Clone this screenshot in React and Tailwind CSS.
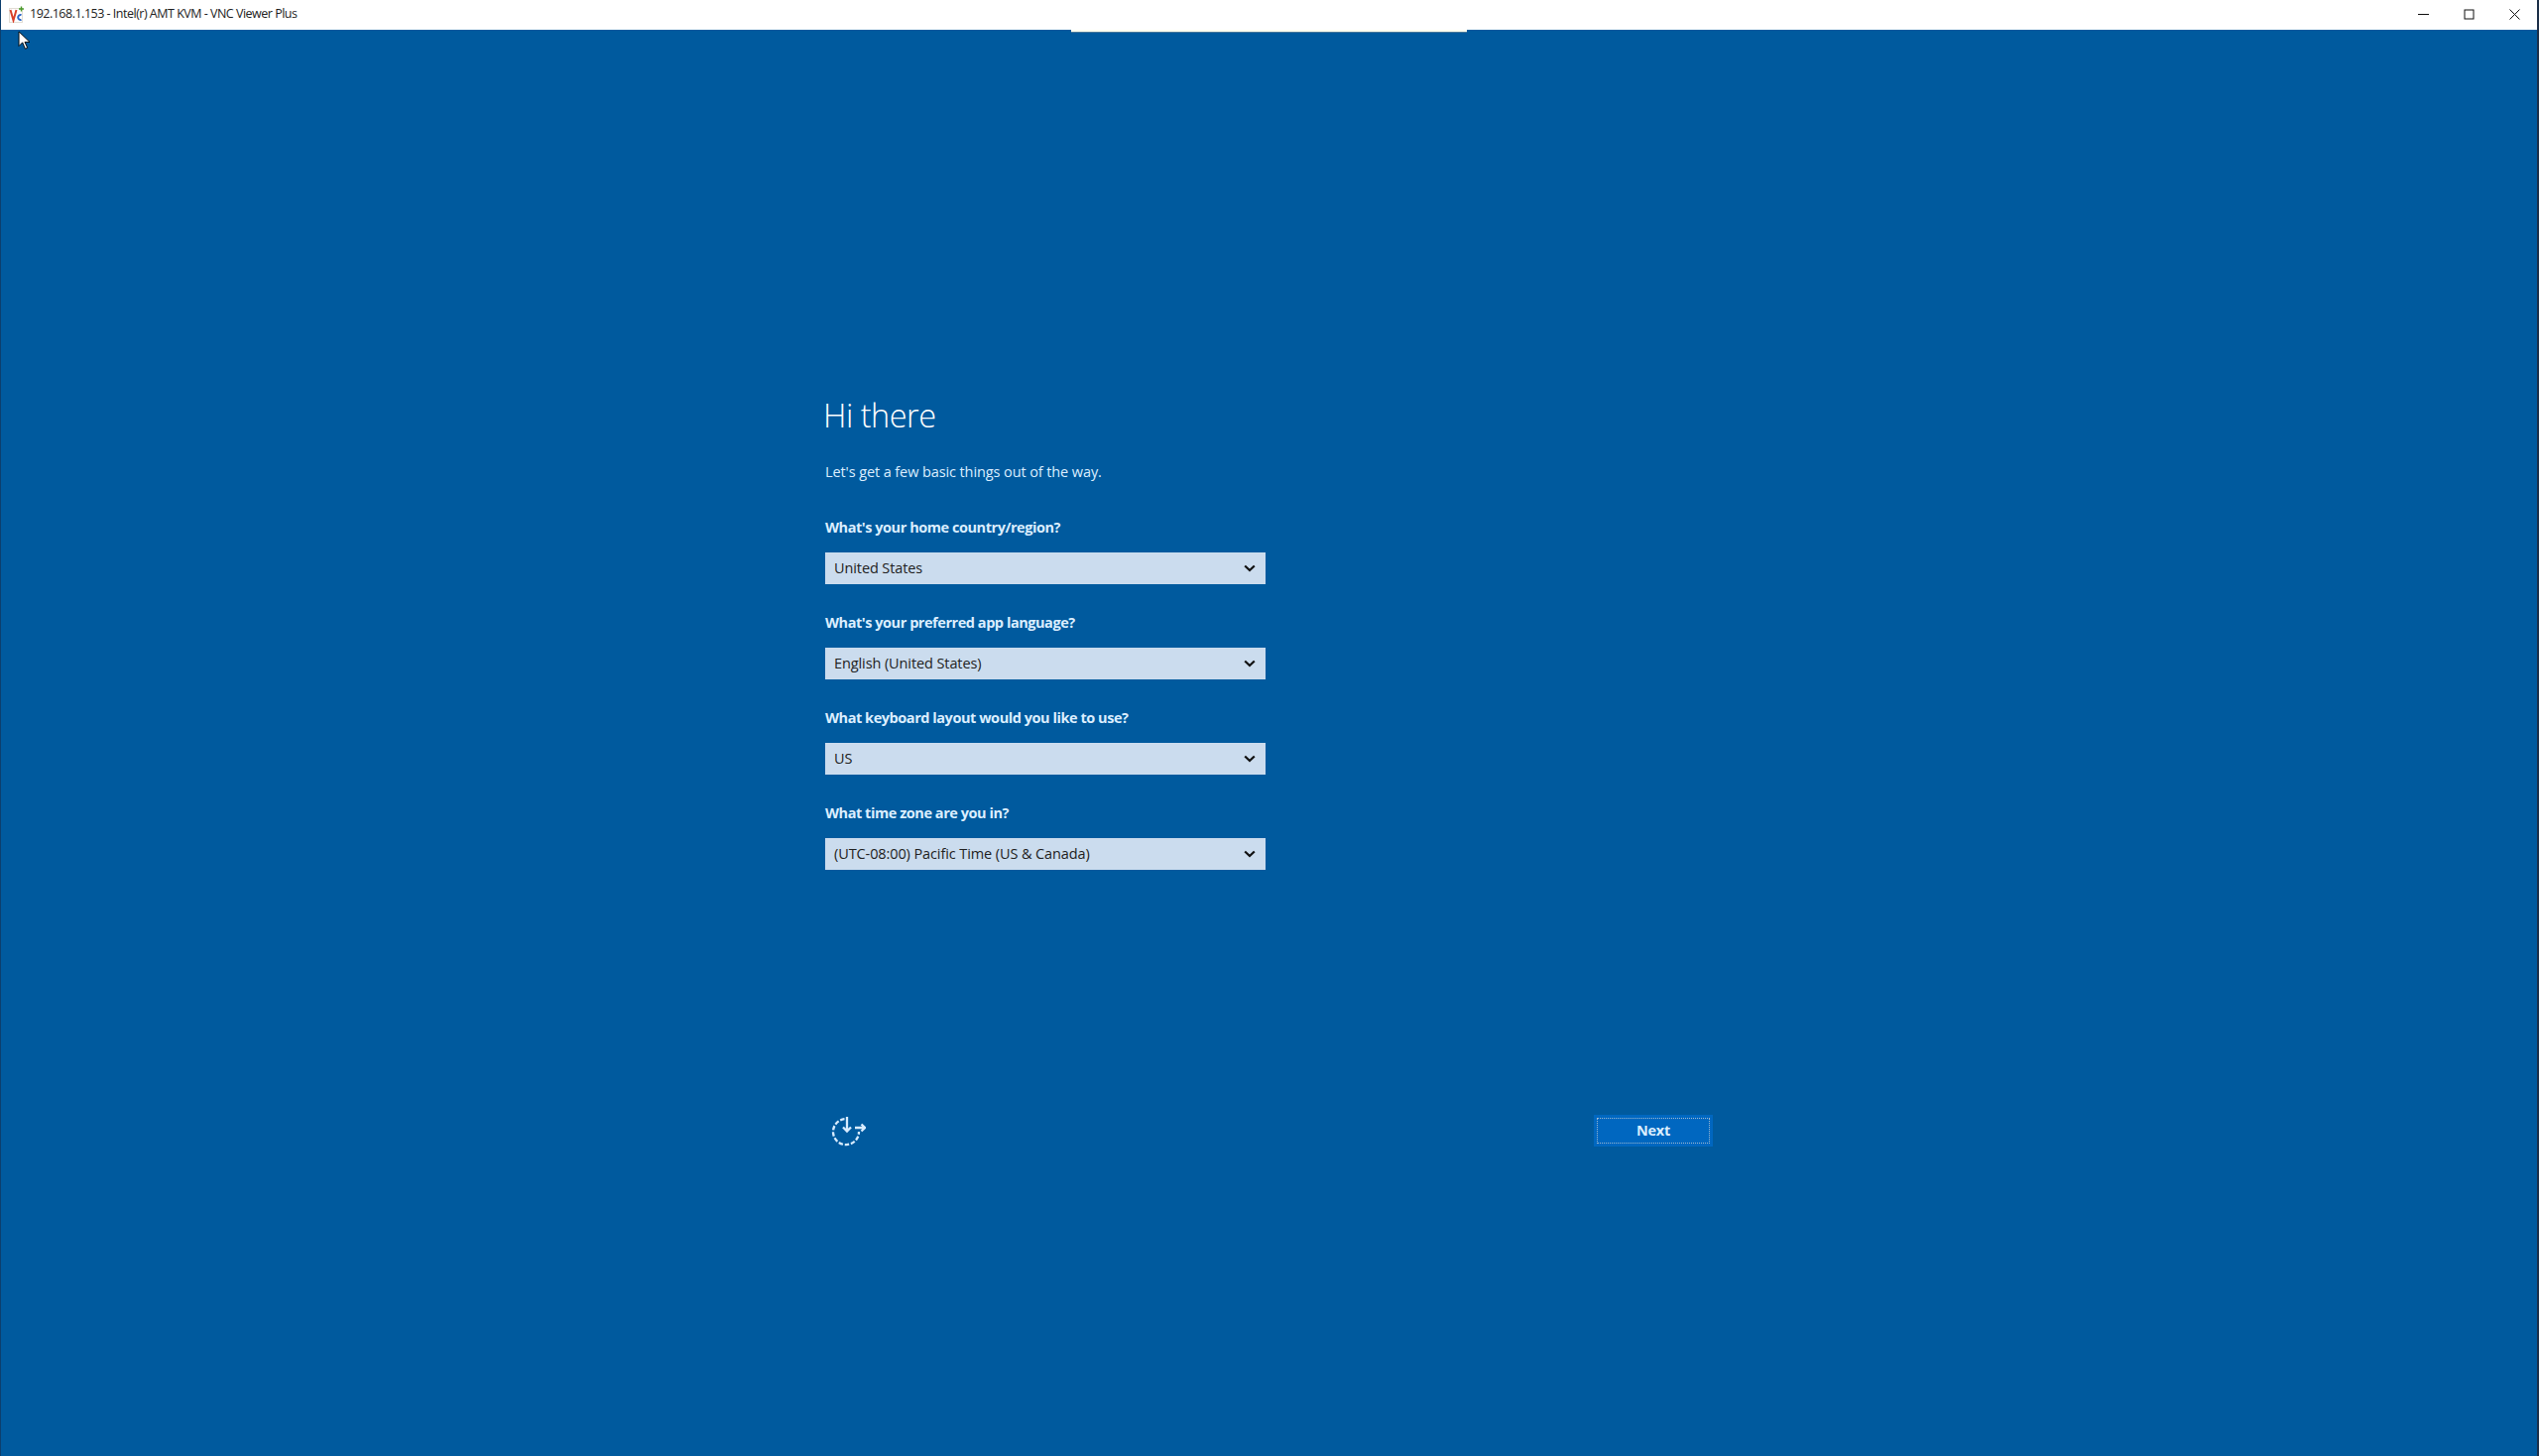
const sans = "font-['Open_Sans','Noto_Sans',sans-serif]";

function Chevron() {
  return (
    <svg width="12" height="8" viewBox="0 0 12 8" fill="none" className="shrink-0">
      <path d="M1.2 1.5 L6 6 L10.8 1.5" stroke="#111" strokeWidth="2.2" />
    </svg>
  );
}

function Field({ label, value, last }) {
  return (
    <div className={last ? "" : "mb-[29px]"}>
      <div className="h-[20px] mb-[15px] text-[14.5px] leading-[20px] font-bold tracking-[-0.45px] text-[#dbeeff]">{label}</div>
      <div className="h-[32px] w-[444px] bg-[#cbdcee] flex items-center justify-between pl-[9px] pr-[10px]">
        <span className="text-[14.5px] tracking-[-0.1px] text-[#222]">{value}</span>
        <Chevron />
      </div>
    </div>
  );
}

function AppIcon() {
  return (
    <svg width="16" height="17" viewBox="0 0 16 17" className="shrink-0">
      <rect x="0.5" y="2.500" width="13" height="14" fill="#fff" stroke="#e2ddd5" />
      <path d="M1.5 4 L4.500 14.500 L7.500 4" fill="none" stroke="#d8402a" strokeWidth="2" />
      <path d="M12.500 9 A2.600 2.600 0 1 0 12.500 14" fill="none" stroke="#2a66c8" strokeWidth="2" />
      <path d="M12.500 0.500v5M10 3h5" stroke="#4a9a2a" strokeWidth="1.4" />
    </svg>
  );
}

export default function App() {
  return (
    <div className={`w-[2560px] h-[1468px] flex flex-col overflow-hidden bg-[#005a9e] border-l border-r-2 border-l-[#0c3f6e] border-r-[#1c2f48] ${sans}`}>
      <div className="h-[30px] shrink-0 bg-white flex items-center relative">
        <div className="ml-[8px] mr-[5px] -mt-[1px]"><AppIcon /></div>
        <span className="text-[12.5px] tracking-[-0.5px] text-[#222] -mt-[1px]">192.168.1.153 - Intel(r) AMT KVM - VNC Viewer Plus</span>
        <div className="ml-auto flex items-center text-black -mt-[2px]">
          <div className="w-[45px] flex justify-center">
            <svg width="11" height="11" viewBox="0 0 11 11"><path d="M0 5.5h11" stroke="#111" strokeWidth="1" /></svg>
          </div>
          <div className="w-[47px] flex justify-center">
            <svg width="11" height="11" viewBox="0 0 11 11"><rect x="1" y="1" width="9" height="9" fill="none" stroke="#111" /></svg>
          </div>
          <div className="w-[45px] flex justify-center">
            <svg width="11" height="11" viewBox="0 0 11 11"><path d="M0.5 0.5l10 10M10.5 0.5l-10 10" stroke="#111" /></svg>
          </div>
        </div>
        <div className="absolute left-[1079px] top-[30px] w-[399px] h-[3px] bg-[#fffff0] border-b border-[#4a7a9a]" />
      </div>

      <div className="flex-1 relative pl-[831px] pt-[367px]">
        <svg width="13" height="20" viewBox="0 0 14 22" className="absolute left-[17px] top-[1px]">
          <path d="M1 1 L1 17 L5 13 L8 20 L10.5 19 L7.5 12.5 L13 12.5 Z" fill="#fff" stroke="#000" strokeWidth="1" />
        </svg>
        <div className="w-[895px]">
          <h1 className="text-[32.5px] leading-[44px] font-light tracking-[-0.5px] text-white -ml-[2px]">Hi there</h1>
          <p className="mt-[25px] text-[14.5px] leading-[20px] tracking-[-0.1px] text-[#dbeeff]">Let's get a few basic things out of the way.</p>
          <div className="mt-[36px]">
            <Field label="What's your home country/region?" value="United States" />
            <Field label="What's your preferred app language?" value="English (United States)" />
            <Field label="What keyboard layout would you like to use?" value="US" />
            <Field label="What time zone are you in?" value="(UTC-08:00) Pacific Time (US & Canada)" last />
          </div>
          <div className="mt-[245px] flex items-center justify-between">
            <svg width="36" height="36" viewBox="0 2 36 36" className="ml-[5px]" fill="none" stroke="#d8ecff" strokeWidth="2.3">
              <path d="M14.500 8.200 A13 13 0 1 0 29 21" strokeDasharray="4.500 1.800" />
              <path d="M17 6 V20 M13 16.500 L17 20.500 L21 16.500" />
              <path d="M25 17 H35 M31.500 13.500 L35 17 L31.500 20.500" />
            </svg>
            <div className="w-[120px] h-[32px] bg-[#0067c0] flex items-center justify-center outline-1 outline-dotted outline-[#9fb8d0] -outline-offset-4">
              <span className="text-[14.5px] font-bold tracking-[-0.3px] text-[#dbeeff]">Next</span>
            </div>
          </div>
        </div>
      </div>
    </div>
  );
}
